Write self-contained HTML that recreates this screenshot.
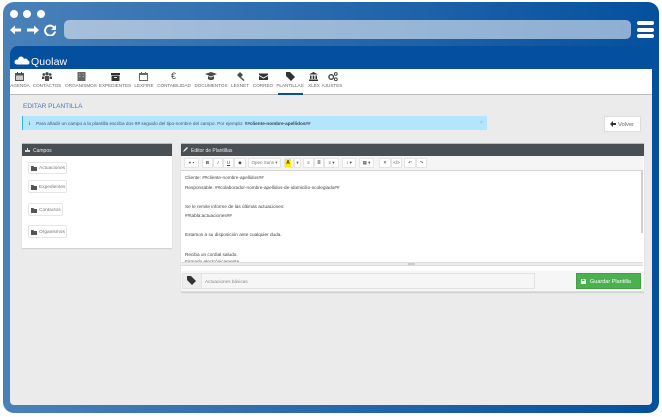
<!DOCTYPE html>
<html><head><meta charset="utf-8">
<style>
html,body{margin:0;padding:0;background:#fff}
body{width:662px;height:417px;position:relative;overflow:hidden;font-family:"Liberation Sans",sans-serif;color:#555;filter:blur(.3px)}
div,span,svg{position:absolute;box-sizing:border-box}
.frame{left:3px;top:2px;width:656px;height:411px;border-radius:11px;background:linear-gradient(90deg,#4a81b9,#05509e)}
.dot{width:8px;height:8px;border-radius:50%;background:#fff;top:10px}
.url{left:64px;top:20px;width:567px;height:19px;border-radius:5px;background:linear-gradient(90deg,#a6bfdb,#8eafd3)}
.bar{left:637px;width:17px;height:4px;border-radius:2px;background:#fff}
.inner{left:10px;top:60px;width:642px;height:345px;background:#ebebeb;border-radius:0 0 4px 4px;overflow:hidden}
.hdr{left:10px;top:46px;width:642px;height:23px;background:#05509e;border-radius:8px 8px 0 0}
.nav{left:10px;top:69px;width:642px;height:26px;background:#fff;border-bottom:1px solid #bdbdbd}
.lb{top:83px;font-size:4.6px;line-height:6px;color:#666;white-space:nowrap;transform:translateX(-50%)}
.ic{top:72px;width:9px;height:9px;fill:#4a4a4a}
.ph{height:13px;background:#4a4f54;border-top:1px solid #bbb;padding-top:1px;color:#e8e8e8;font-size:5px;line-height:12px;white-space:nowrap}
.fb{border:1px solid #e6e6e6;border-radius:2px;background:#fff;font-size:4.8px;color:#777;white-space:nowrap;padding:1px 0 0 10px}
.tg{top:158px;height:10px;background:#fff;border:1px solid #e4e4e4;border-radius:1px;font-size:4.5px;line-height:8px;color:#444;text-align:center;white-space:nowrap}
.t{left:185px;font-size:4.7px;line-height:6px;color:#444;white-space:nowrap}
</style></head><body>
<div class="frame"></div>
<div class="dot" style="left:10px"></div><div class="dot" style="left:23px"></div><div class="dot" style="left:37px"></div>
<svg style="left:9px;top:24px" width="48" height="12" viewBox="0 0 48 12" fill="#fff"><path d="M1 6 L6 1.500 V4.500 H12 V7.500 H6 V10.500Z"/><path d="M30 6 L25 1.500 V4.500 H18 V7.500 H25 V10.500Z"/><path d="M45 3.500 A5 5 0 1 0 46 7.500" fill="none" stroke="#fff" stroke-width="2"/><path d="M47 1 V6 H42Z"/></svg>
<div class="url"></div>
<div class="bar" style="top:21px"></div><div class="bar" style="top:28px"></div><div class="bar" style="top:34px"></div>
<div class="inner"></div>
<div class="hdr"></div>
<svg style="left:14px;top:56px" width="16" height="9" viewBox="0 0 16 9" fill="#fff"><circle cx="3" cy="6" r="2.500"/><circle cx="7" cy="3.500" r="3"/><circle cx="11.500" cy="5" r="2.500"/><circle cx="13.500" cy="6.500" r="2"/><path d="M3 6H13.500V8.500H3Z"/></svg>
<span style="left:31px;top:56px;font-size:10.500px;line-height:12px;color:#fff;letter-spacing:.1px">Quolaw</span>
<div class="nav"></div>
<svg class="ic" style="left:15px" viewBox="0 0 9 9"><path d="M0 1H9V9H0Z" fill="#555"/><path d="M1 3.500H8V8H1Z" fill="#ccc"/><path d="M2 0h1v2H2ZM6 0h1v2H6Z"/></svg>
<svg class="ic" style="left:42px;width:10px" viewBox="0 0 10 9"><circle cx="5" cy="1.800" r="1.700"/><circle cx="1.800" cy="2.500" r="1.400"/><circle cx="8.200" cy="2.500" r="1.400"/><path d="M0 7V4.500H2.500V7ZM7.500 4.500H10V7H7.500ZM3 4H7V9H3Z"/></svg>
<svg class="ic" style="left:77px" viewBox="0 0 9 9"><path d="M.500 0H8.500V9H.500Z" fill="#666"/><path d="M2 1.500h1.500v1H2ZM5.500 1.500H7v1H5.500ZM2 4h1.500v1H2ZM5.500 4H7v1H5.500Z" fill="#aaa"/></svg>
<svg class="ic" style="left:111px" viewBox="0 0 9 9"><path d="M0 1H9V3H0ZM.500 3.500H8.500V9H.500Z" fill="#333"/><path d="M3 5H6V6H3Z" fill="#ddd"/></svg>
<svg class="ic" style="left:139px" viewBox="0 0 9 9"><path d="M.500 1.500H8.500V8.500H.500Z" fill="#fff" stroke="#666" stroke-width="1"/><path d="M0 1H9V3H0ZM2 0h1v2H2ZM6 0h1v2H6Z" fill="#666"/></svg>
<span style="left:171px;top:71px;font-size:9px;line-height:10px;color:#444">€</span>
<svg class="ic" style="left:205px;width:12px" viewBox="0 0 12 9"><path d="M0 2L6 0L12 2L6 4.500Z"/><path d="M3 4L6 5.500L9 4V7C7 8.500 5 8.500 3 7Z"/></svg>
<svg class="ic" style="left:236px" viewBox="0 0 9 9"><path d="M1 3L4 0L7 3L4 6Z"/><path d="M5 5L8.500 8L7.500 9L4 6Z"/></svg>
<svg class="ic" style="left:259px" viewBox="0 0 9 9"><path d="M0 1.500H9V3L4.500 5.500L0 3ZM0 4L4.500 6.500L9 4V8H0Z" fill="#333"/></svg>
<svg class="ic" style="left:286px" viewBox="0 0 9 9"><path d="M0 0H4L9 5L5 9L0 4Z" fill="#333"/></svg>
<svg class="ic" style="left:309px" viewBox="0 0 9 9"><path d="M4.500 0L9 2.500H0ZM1 3.500H2.500V7H1ZM3.700 3.500H5.300V7H3.700ZM6.500 3.500H8V7H6.500ZM0 7.500H9V9H0Z" fill="#333"/></svg>
<svg class="ic" style="left:328px;width:10px" viewBox="0 0 10 9"><circle cx="3.200" cy="5" r="2.300" fill="none" stroke="#444" stroke-width="1.400"/><circle cx="7.800" cy="2" r="1.400" fill="none" stroke="#444"/><circle cx="7.800" cy="7.300" r="1.400" fill="none" stroke="#444"/></svg>
<span class="lb" style="left:20px">AGENDA</span><span class="lb" style="left:47px">CONTACTOS</span><span class="lb" style="left:81px">ORGANISMOS</span><span class="lb" style="left:115px">EXPEDIENTES</span><span class="lb" style="left:144px">LEXFIRE</span><span class="lb" style="left:174px">CONTABILIDAD</span><span class="lb" style="left:211px">DOCUMENTOS</span><span class="lb" style="left:240px">LEXNET</span><span class="lb" style="left:263px">CORREO</span><span class="lb" style="left:290px">PLANTILLAS</span><span class="lb" style="left:314px">XLEX</span><span class="lb" style="left:332px">AJUSTES</span>
<div style="left:278px;top:93px;width:25px;height:2px;background:#05509e"></div>

<span style="left:23px;top:103px;font-size:6.500px;line-height:8px;color:#4a78b8;white-space:nowrap">EDITAR PLANTILLA</span>
<div style="left:22px;top:116px;width:465px;height:14px;background:#b3e5fc;border-left:1px solid #29b6f6"></div>
<span style="left:29px;top:121px;font-size:4.700px;line-height:6px;color:#456;font-weight:bold">i</span>
<span style="left:36px;top:121px;font-size:4.700px;line-height:6px;color:#456;white-space:nowrap">Para añadir un campo a la plantilla escriba dos <b>##</b> seguido del tipo-nombre del campo. Por ejemplo: <b style="color:#345">##cliente-nombre-apellidos##</b></span>
<span style="left:480px;top:120px;font-size:5px;line-height:6px;color:#9ab">×</span>
<div style="left:604px;top:116px;width:37px;height:16px;background:#fff;border:1px solid #ddd;font-size:5.800px;line-height:14px;padding-top:1px;color:#666;padding-left:13px">Volver</div>
<svg style="left:610px;top:121px" width="6" height="6" viewBox="0 0 6 6" fill="#333"><path d="M0 3L3 0V2H6V4H3V6Z"/></svg>

<div style="left:22px;top:143px;width:150px;height:105px;background:#fff;box-shadow:0 1px 1px #ccc"></div>
<div class="ph" style="left:22px;top:143px;width:150px;padding-left:11px">Campos</div>
<svg style="left:25px;top:147px" width="5" height="5" viewBox="0 0 5 5" fill="#ddd"><path d="M0 5V3H2V1H3V3H5V5Z"/></svg>
<div class="fb" style="left:28px;top:162px;width:39px;height:12px;line-height:10px">Actuaciones</div>
<div class="fb" style="left:28px;top:180px;width:39px;height:13px;line-height:11px">Expedientes</div>
<div class="fb" style="left:28px;top:203px;width:35px;height:13px;line-height:11px">Contactos</div>
<div class="fb" style="left:28px;top:225px;width:39px;height:13px;line-height:11px">Organismos</div>
<svg style="left:31px;top:166px" width="6" height="5" viewBox="0 0 6 5" fill="#555"><path d="M0 0H2.500L3 1H6V5H0Z"/></svg>
<svg style="left:31px;top:185px" width="6" height="5" viewBox="0 0 6 5" fill="#555"><path d="M0 0H2.500L3 1H6V5H0Z"/></svg>
<svg style="left:31px;top:208px" width="6" height="5" viewBox="0 0 6 5" fill="#555"><path d="M0 0H2.500L3 1H6V5H0Z"/></svg>
<svg style="left:31px;top:230px" width="6" height="5" viewBox="0 0 6 5" fill="#555"><path d="M0 0H2.500L3 1H6V5H0Z"/></svg>

<div style="left:181px;top:143px;width:463px;height:149px;background:#fff;box-shadow:0 1px 1px #ccc"></div>
<div class="ph" style="left:181px;top:143px;width:463px;padding-left:10px">Editor de Plantillas</div>
<svg style="left:183px;top:147px" width="5" height="5" viewBox="0 0 5 5" fill="#eee"><path d="M0 5L1 3L4 0L5 1L2 4Z"/></svg>
<div style="left:181px;top:156px;width:462px;height:15px;background:#f5f5f5;border-bottom:1px solid #d4d4d4"></div>
<div class="tg" style="left:184px;width:15px">⌖ ▾</div>
<div class="tg" style="left:202px;width:11px;font-weight:bold">B</div>
<div class="tg" style="left:213px;width:10px;font-style:italic">I</div>
<div class="tg" style="left:223px;width:11px;text-decoration:underline">U</div>
<div class="tg" style="left:234px;width:12px">◆</div>
<div class="tg" style="left:248px;width:33px;color:#777">Open Sans ▾</div>
<div class="tg" style="left:284px;width:10px"></div>
<div style="left:285px;top:159px;width:6px;height:8px;background:#ffee00;font-size:5px;line-height:8px;text-align:center;color:#333;font-weight:bold">A</div>
<div class="tg" style="left:294px;width:7px">▾</div>
<div class="tg" style="left:303px;width:11px">≡</div>
<div class="tg" style="left:314px;width:10px">≣</div>
<div class="tg" style="left:324px;width:15px">≡ ▾</div>
<div class="tg" style="left:342px;width:14px">↕ ▾</div>
<div class="tg" style="left:359px;width:15px">▦ ▾</div>
<div class="tg" style="left:379px;width:12px">✕</div>
<div class="tg" style="left:391px;width:11px">&lt;/&gt;</div>
<div class="tg" style="left:404px;width:12px">↶</div>
<div class="tg" style="left:416px;width:11px">↷</div>

<span class="t" style="top:175px">Cliente: ##cliente-nombre-apellidos##</span>
<span class="t" style="top:185px">Responsable: ##colaborador-nombre-apellidos-de-idomicilio-ncolegiado##</span>
<span class="t" style="top:204px">Se le remite informe de las últimas actuaciones:</span>
<span class="t" style="top:213px">##tabla:actuaciones##</span>
<span class="t" style="top:232px">Estamos a su disposición ante cualquier duda.</span>
<span class="t" style="top:252px">Reciba un cordial saludo.</span>
<div style="left:185px;top:259px;width:100px;height:3px;overflow:hidden"><span style="left:0;top:0;font-size:4.700px;line-height:6px;color:#555;white-space:nowrap">Firmado electrónicamente</span></div>
<div style="left:641px;top:171px;width:2px;height:62px;background:#cfcfcf"></div>
<div style="left:181px;top:262px;width:462px;height:4px;background:#eee;border-top:1px solid #ddd;border-bottom:1px solid #ddd"></div>
<div style="left:408px;top:263px;width:7px;height:2px;background:#ccc"></div>
<div style="left:181px;top:271px;width:463px;height:21px;background:#f6f6f6;border-bottom:1px solid #ddd"></div>
<div style="left:182px;top:273px;width:353px;height:16px;background:#f6f6f6;border:1px solid #e2e2e2"></div>
<div style="left:182px;top:273px;width:20px;height:16px;background:#eee;border:1px solid #e2e2e2"></div>
<svg style="left:187px;top:276px" width="9" height="9" viewBox="0 0 9 9" fill="#333"><path d="M0 0H4L9 5L5 9L0 4Z"/></svg>
<span style="left:205px;top:279px;font-size:4.700px;line-height:6px;color:#888;white-space:nowrap">Actuaciones básicas</span>
<div style="left:576px;top:273px;width:65px;height:16px;background:#4caf50;border:1px solid #43a047;color:#fff;font-size:5.500px;line-height:14px;padding-top:1px;padding-left:13px;white-space:nowrap">Guardar Plantilla</div>
<svg style="left:581px;top:279px" width="5" height="5" viewBox="0 0 5 5" fill="#fff"><path d="M0 0H4L5 1V5H0ZM1 .500V2H3.500V.500Z"/></svg>
</body></html>
